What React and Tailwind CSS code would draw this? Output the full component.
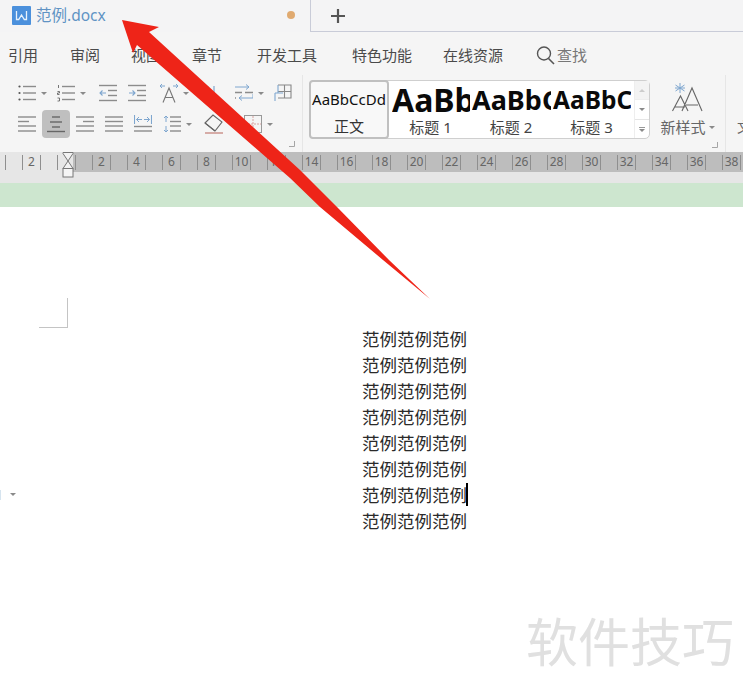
import React from "react";

const G = "#8c8c8c";
const B = "#7ea6cf";

function Svg({ w = 18, h = 18, className = "", children }) {
  return (
    <svg width={w} height={h} viewBox={`0 0 ${w} ${h}`} fill="none" className={`shrink-0 ${className}`}>
      {children}
    </svg>
  );
}

function Lines({ rows, color = G }) {
  return rows.map(([x1, x2, y], i) => <path key={i} d={`M${x1} ${y}H${x2}`} stroke={color} strokeWidth="1.4" />);
}

const Bullets = () => (
  <Svg>
    <Lines rows={[[5, 18, 2.5], [5, 18, 9], [5, 18, 15.5]]} />
    <circle cx="1.5" cy="2.5" r="1.1" fill="#555" />
    <circle cx="1.5" cy="9" r="1.1" fill="#555" />
    <circle cx="1.5" cy="15.5" r="1.1" fill="#555" />
  </Svg>
);
const Numbered = () => (
  <Svg>
    <Lines rows={[[5, 18, 2.5], [5, 18, 9], [5, 18, 15.5]]} />
    <path d="M1.5 1v3M0.5 7.5h2v1.5h-2v1.5h2M0.5 14h2v3h-2" stroke="#555" strokeWidth="0.8" />
  </Svg>
);
const Outdent = () => (
  <Svg>
    <Lines rows={[[0, 18, 1.5], [9, 18, 6.5], [9, 18, 11.5], [0, 18, 16.5]]} />
    <path d="M7 9H1M3.5 6.5L1 9l2.5 2.5" stroke={B} strokeWidth="1.1" />
  </Svg>
);
const Indent = () => (
  <Svg>
    <Lines rows={[[0, 18, 1.5], [9, 18, 6.5], [9, 18, 11.5], [0, 18, 16.5]]} />
    <path d="M1 9h6M4.5 6.5L7 9l-2.5 2.5" stroke={B} strokeWidth="1.1" />
  </Svg>
);
const TextA = () => (
  <Svg w={20} h={20}>
    <path d="M4 19.5L10 5l6 14.5M6 14.5h8" stroke="#777" strokeWidth="1.1" />
    <path d="M1 3h5M3 1L1 3l2 2M14 3h5M17 1l2 2-2 2" stroke={B} strokeWidth="1" />
  </Svg>
);
const Covered = () => (
  <Svg>
    <path d="M14 2v14" stroke={B} strokeWidth="1.2" />
    <path d="M4 12L7.5 2 11 12" stroke="#888" strokeWidth="1" />
  </Svg>
);
const Swap = () => (
  <Svg>
    <path d="M0 3h14M11 0.5L14 3l-3 2.500" stroke={B} strokeWidth="1" />
    <path d="M0 8.500h7M10 8.500h8" stroke={G} strokeWidth="1.300" />
    <path d="M18 10v4H4M7 11.500L4 14l3 2.500" stroke={B} strokeWidth="1" />
    <path d="M0 14h1" stroke={G} strokeWidth="1.300" />
  </Svg>
);
const TableI = () => (
  <Svg>
    <path d="M4 1h13v13H4M10.5 1v13M4 7.5h13" stroke="#888" strokeWidth="1.1" />
    <path d="M4 1v8M1 9v8M1 9h8" stroke={B} strokeWidth="1.1" />
  </Svg>
);
const AlignL = () => <Svg><Lines rows={[[0, 18, 2], [0, 11, 6.5], [0, 18, 11], [0, 18, 16]]} /></Svg>;
const AlignC = () => (
  <Svg>
    <Lines color="#666" rows={[[5, 13, 2], [3, 15, 7], [5, 13, 12]]} />
    <path d="M0 16.5H18" stroke="#666" strokeWidth="1.4" />
  </Svg>
);
const AlignR = () => <Svg><Lines rows={[[0, 18, 2], [7, 18, 6.5], [0, 18, 11], [0, 18, 16]]} /></Svg>;
const Justify = () => <Svg><Lines rows={[[0, 18, 2], [0, 18, 6.5], [0, 18, 11], [0, 18, 16]]} /></Svg>;
const Distrib = () => (
  <Svg>
    <path d="M0.5 0v9M17.5 0v9" stroke={B} strokeWidth="1.1" />
    <path d="M2.500 4.500h5.500M5 2L2.500 4.500 5 7M15.500 4.500h-5.500M13 2l2.500 2.500L13 7" stroke={B} strokeWidth="1" />
    <Lines rows={[[0, 18, 11.5], [0, 18, 16]]} />
  </Svg>
);
const Spacing = () => (
  <Svg>
    <Lines rows={[[7, 18, 2], [7, 18, 6.5], [7, 18, 11], [7, 18, 16]]} />
    <path d="M3 1v6M1 3l2-2 2 2M3 11v6M1 15l2 2 2-2" stroke={B} strokeWidth="1" />
  </Svg>
);
const Eraser = () => (
  <Svg w={20} h={20}>
    <path d="M1 9L9 1l9 7-7 9z" stroke="#666" strokeWidth="1.1" />
    <path d="M1 9l10 8" stroke="#666" strokeWidth="1.1" />
    <path d="M1 19h18" stroke="#c98d86" strokeWidth="1.4" />
  </Svg>
);
const Borders = () => (
  <Svg>
    <rect x="0.5" y="0.5" width="17" height="17" stroke="#999" />
    <path d="M9 1v16M1 9h16" stroke="#d9a3a0" strokeWidth="1" strokeDasharray="2 1" />
  </Svg>
);
const Caret = ({ className = "" }) => (
  <span className={`w-0 h-0 shrink-0 border-x-[3px] border-x-transparent border-t-[3px] border-t-[#8a8a8a] ${className}`} />
);
const Launcher = () => (
  <svg width="6" height="6" viewBox="0 0 6 6" fill="none" className="shrink-0">
    <path d="M0 5.5H5.5V0" stroke="#a5a5a5" />
  </svg>
);

const menu = [
  ["引用", "ml-[8px]"],
  ["审阅", "ml-[32px]"],
  ["视图", "ml-[31px]"],
  ["章节", "ml-[31px]"],
  ["开发工具", "ml-[35px]"],
  ["特色功能", "ml-[35px]"],
  ["在线资源", "ml-[31px]"],
];

const styles = [
  ["AaBb", "标题 1", "text-[32px]", "w-[81px] pl-[3px]"],
  ["AaBbCc", "标题 2", "text-[27px]", "w-[81px] pl-[2px]"],
  ["AaBbCc", "标题 3", "text-[24.500px]", "w-[80px] pl-[2px]"],
];

const rulerLabels = ["", "2", "", "2", "4", "6", "8", "10", "12", "14", "16", "18", "20", "22", "24", "26", "28", "30", "32", "34", "36", "38", ""];

const lines = Array.from({ length: 8 });

export default function App() {
  return (
    <div className="relative w-[743px] h-[696px] overflow-hidden bg-white font-['Noto_Sans','Noto_Sans_CJK_SC',sans-serif]">
      {/* title bar */}
      <div className="flex h-[32px] bg-[#f4f4f5]">
        <div className="relative flex w-[311px] items-center border-r border-[#c9ccd8] pb-[1px] pl-[12px]">
          <div className="flex h-[19px] w-[19px] items-center justify-center rounded-[1px] bg-[#4b90dc]">
            <svg width="13" height="11" viewBox="0 0 13 11" fill="none">
              <path d="M1.5 1v8.5h2.2L6.5 5l2.8 4.500h2.200V1" stroke="#e8f2fc" strokeWidth="1.300" />
            </svg>
          </div>
          <span className="ml-[5px] text-[15.500px] leading-none text-[#5f93c4]">范例.docx</span>
          <span className="absolute left-[287px] top-[11px] h-[8px] w-[8px] rounded-full bg-[#e0aa70]" />
        </div>
        <div className="flex flex-1 items-center border-b border-[#c9ccd8] pl-[19px]">
          <svg width="16" height="16" viewBox="0 0 16 16">
            <path d="M8 1v14M1 8h14" stroke="#555" strokeWidth="2.200" />
          </svg>
        </div>
      </div>

      {/* menu */}
      <div className="flex h-[43px] items-center bg-[#f5f5f5] pt-[3px] text-[15px] leading-none text-[#4a4a4a]">
        {menu.map(([t, m]) => (
          <span key={t} className={`${m} whitespace-nowrap`}>{t}</span>
        ))}
        <svg width="19" height="20" viewBox="0 0 19 20" fill="none" className="ml-[33px]">
          <circle cx="8" cy="8.500" r="6.500" stroke="#555" strokeWidth="1.400" />
          <path d="M12.500 13.500L18 19" stroke="#555" strokeWidth="1.600" />
        </svg>
        <span className="ml-[2px] text-[#777]">查找</span>
      </div>

      {/* toolbar */}
      <div className="flex h-[77px] bg-[#f5f5f5]">
        <div className="relative flex w-[303px] shrink-0 flex-col border-r border-[#e6e6e6] pt-[9px]">
          <div className="flex h-[18px] items-center pl-[18px]">
            <Bullets /><Caret className="ml-[5px]" />
            <span className="ml-[10px]"><Numbered /></span><Caret className="ml-[5px]" />
            <span className="ml-[13px]"><Outdent /></span>
            <span className="ml-[11px]"><Indent /></span>
            <span className="ml-[13px]"><TextA /></span><Caret className="ml-[4px]" />
            <span className="ml-[11px]"><Covered /></span>
            <span className="ml-[17px]"><Swap /></span><Caret className="ml-[5px]" />
            <span className="ml-[10px]"><TableI /></span>
          </div>
          <div className="mt-[8px] flex h-[28px] items-center pl-[18px]">
            <AlignL />
            <span className="ml-[6px] flex h-[28px] w-[28px] items-center justify-center rounded-[4px] bg-[#bfbfbf]"><AlignC /></span>
            <span className="ml-[6px]"><AlignR /></span>
            <span className="ml-[11px]"><Justify /></span>
            <span className="ml-[11px]"><Distrib /></span>
            <span className="ml-[11px]"><Spacing /></span><Caret className="ml-[5px]" />
            <span className="ml-[12px]"><Eraser /></span>
            <span className="ml-[20px]"><Borders /></span><Caret className="ml-[5px]" />
          </div>
          <div className="absolute bottom-[5px] right-[7px]"><Launcher /></div>
        </div>

        {/* style gallery */}
        <div className="ml-[6px] mt-[5px] flex h-[59px] w-[341px] shrink-0 rounded-[5px] border border-[#cfcfcf] bg-white">
          <div className="-my-px -ml-px flex w-[80px] shrink-0 flex-col items-center rounded-[4px] border-2 border-[#c0c0c0] bg-[#f8f8f8]">
            <span className="mt-[7px] text-[15px] leading-[20px] text-[#111]">AaBbCcDd</span>
            <span className="mt-[8px] text-[15px] leading-[18px] text-[#333]">正文</span>
          </div>
          {styles.map(([a, l, s, w]) => (
            <div key={l} className={`flex shrink-0 flex-col overflow-hidden ${w}`}>
              <div className="flex h-[37px] items-end overflow-hidden whitespace-nowrap font-bold leading-[37px] text-[#0a0a0a]">
                <span className={s}>{a}</span>
              </div>
              <span className="pr-[1px] text-center text-[15px] leading-[18px] text-[#444]">{l}</span>
            </div>
          ))}
          <div className="ml-auto flex w-[15px] shrink-0 flex-col border-l border-[#eeeeee]">
            <div className="flex h-[19px] items-center justify-center border-b border-[#eeeeee] bg-[#f3f3f3]">
              <span className="h-0 w-0 border-x-[3px] border-b-[3px] border-x-transparent border-b-[#cccccc]" />
            </div>
            <div className="flex h-[20px] items-center justify-center border-b border-[#e5e5e5]">
              <Caret />
            </div>
            <div className="flex flex-1 flex-col items-center justify-center gap-[1px]">
              <span className="h-px w-[6px] bg-[#999]" />
              <Caret />
            </div>
          </div>
        </div>

        {/* new style */}
        <div className="relative flex w-[76px] shrink-0 flex-col items-center border-r border-[#e6e6e6] pt-[8px]">
          <svg width="32" height="30" viewBox="0 0 32 30" fill="none">
            <path d="M8 0v10M3.500 2l9 6M12.500 2l-9 6M3 5h10" stroke={B} strokeWidth="1" />
            <path d="M0.500 28L8.500 13l7.500 15M10 28L20 5l10 23M3 24h10M14 22h12" stroke="#666" strokeWidth="1.100" />
          </svg>
          <div className="mt-[5px] flex items-center gap-[3px] text-[15px] leading-[18px] text-[#666]">
            <span>新样式</span><Caret />
          </div>
          <div className="absolute bottom-[4px] right-[7px]"><Launcher /></div>
        </div>
        <span className="ml-[11px] mt-[43px] whitespace-nowrap text-[14px] leading-[18px] text-[#666]">文</span>
      </div>

      {/* ruler */}
      <div className="relative h-[31px] overflow-hidden bg-[#e6e6e6]">
        <div className="ml-[-21px] flex h-[20px] w-[800px] items-center">
          {rulerLabels.map((t, i) => (
            <div key={i} className={`flex h-[20px] w-[35px] shrink-0 items-center justify-center ${i >= 3 ? "bg-[#bdbdbd]" : i === 2 ? "bg-[linear-gradient(to_right,#e6e6e6_70%,#bdbdbd_70%)]" : ""}`}>
              <span className="flex h-[15px] w-[19px] items-center justify-center border-x border-[#8f8f8f] text-[12px] leading-none text-[#666]">{t}</span>
            </div>
          ))}
        </div>
        <svg width="12" height="26" viewBox="0 0 12 26" fill="none" className="absolute left-[62px] top-0">
          <path d="M1 0.500h10v1L6 9l5 7.500H1L6 9 1 1.500z" fill="#f2f2f2" stroke="#777" />
          <rect x="1" y="16.500" width="10" height="8.500" fill="#f5f5f5" stroke="#777" />
        </svg>
      </div>

      {/* green band */}
      <div className="h-[24px] bg-[#cde6cf]" />

      {/* page */}
      <div className="relative">
        <div className="absolute left-[39px] top-[91px] h-[30px] w-[29px] border-b border-r border-[#c4c4c4]" />
        <div className="absolute left-0 top-[283px] h-[10px] w-px bg-[#d6e4ef]" />
        <div className="absolute left-[10px] top-[288px]"><Caret /></div>
        <div className="flex flex-col pl-[362px] pt-[119px]">
          {lines.map((_, i) => (
            <div key={i} className="relative h-[26px] whitespace-nowrap font-['Noto_Sans_CJK_SC',serif] text-[17.500px] leading-[26px] text-[#2a2a2a]">
              范例范例范例
              {i === 6 && <span className="absolute left-[104px] top-[1px] h-[23px] w-[2px] bg-black" />}
            </div>
          ))}
        </div>
      </div>

      {/* watermark */}
      <span className="absolute left-[526px] top-[604px] whitespace-nowrap font-['Noto_Sans_CJK_SC',sans-serif] text-[52px] leading-[72px] text-[#e0e0e0]">软件技巧</span>

      {/* annotation arrow */}
      <svg width="743" height="696" viewBox="0 0 743 696" className="pointer-events-none absolute left-0 top-0">
        <polygon points="122,20 159,27 149,32 300,170 337,207 389,260 430,299 383,260 320,207 290,178 137,45 133,53" fill="#ee2418" />
      </svg>
    </div>
  );
}
